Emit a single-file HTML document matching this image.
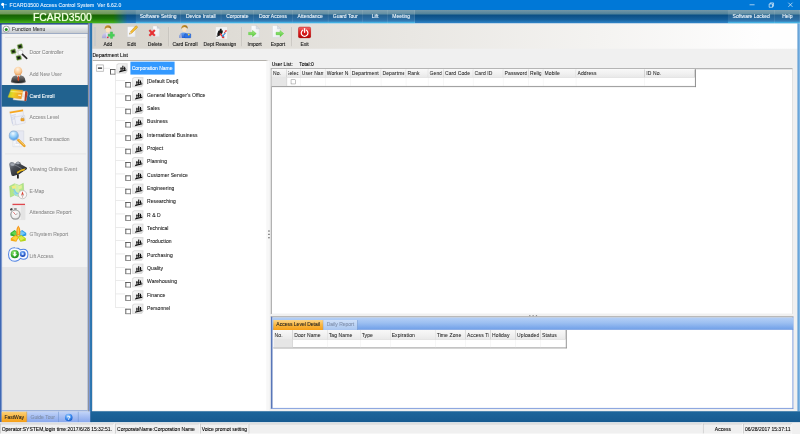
<!DOCTYPE html>
<html lang="en"><head><meta charset="utf-8"><title>FCARD3500 Access Control System</title>
<style>
*{box-sizing:border-box;margin:0;padding:0}
html,body{width:800px;height:434px;overflow:hidden;background:#f0f0f0}
body{font-family:"Liberation Sans",sans-serif;font-size:12px;color:#000;-webkit-text-stroke:0.2px currentColor}
#app{position:absolute;left:0;top:0;width:1920px;height:1042px;transform:scale(0.4166667);transform-origin:0 0;background:#f0f0f0;overflow:hidden}
.a{position:absolute}
.t{position:absolute;white-space:nowrap;line-height:14px;height:14px}
#title{left:0;top:0;width:1920px;height:23.5px;background:#0078d7}
#title .t{color:#e4f1ff;font-size:12px;left:23px;top:5px;letter-spacing:.28px;-webkit-text-stroke:.25px #e4f1ff}
#banner{left:0;top:23.5px;width:1920px;height:32.5px;background:linear-gradient(to bottom,#7397a8 0,#4f8199 31%,#1d5f8c 35%,#0b4f85 40%,#15609c 72%,#3288cc 100%)}
#green{left:0;top:0;width:330px;height:33px;background:linear-gradient(to bottom,#86a874 0,#6a9658 30%,#3c7a22 33%,#176404 40%,#1f7a08 65%,#4fbe20 100%);-webkit-mask-image:linear-gradient(to right,#000 0,#000 272px,transparent 306px);mask-image:linear-gradient(to right,#000 0,#000 272px,transparent 306px)}
#logo{left:79px;top:2px;transform:scaleX(.925);font-size:27px;line-height:30px;height:30px;color:#f4ffe6;text-shadow:0 0 3px #d8ffb0;transform-origin:0 50%}
.mi{position:absolute;top:0;height:33px;background:linear-gradient(to bottom,rgba(255,255,255,.10),rgba(255,255,255,.10) 84%,rgba(80,220,255,.6) 90%,rgba(120,220,255,.35) 100%);border-right:1px solid rgba(255,255,255,.22);color:#eaf3f9;font-size:12px;line-height:33px;text-align:center;white-space:nowrap;-webkit-text-stroke:0.15px #eaf3f9;text-shadow:0 0 2px rgba(255,255,255,.35)}

#toolbar{left:221px;top:57px;width:1693px;height:60px;background:linear-gradient(to right,#d6d2ca 0,#dfdcd6 20%,#e9e7e3 45%,#f4f3f1 72%,#fefefe 95%)}
#toolbar .sep{top:8px;width:1px;height:46px;background:#a9a59e;box-shadow:1px 0 0 #f4f2ee}
.tb{position:absolute;top:0;width:100px;height:60px;text-align:center}
.tb .ico{position:absolute;left:34px;top:2px;width:32px;height:34px;display:block}
.tb .ico svg{display:block}
.tb .lb{position:absolute;left:0;width:100px;top:42.5px;line-height:14px;font-size:12px;white-space:nowrap;color:#111}
#side{left:0;top:56px;width:221px;height:958px;background:#3f68b4}
#side:before{content:"";position:absolute;left:0;top:0;width:221px;height:3px;background:#1d3f78}
#side:after{content:"";position:absolute;left:211px;top:0;width:10px;height:931px;background:linear-gradient(to right,#8e929c 0,#8e929c 1.5px,#809ddb 1.5px,#7191d5 6px,#2f78b2 6px,#2a72ab 10px)}
#sidehead{left:4px;top:3px;width:207px;height:22px;background:linear-gradient(to bottom,#f8f9fb,#dfe2e6 50%,#c4c8cd);border-bottom:1px solid #a4a8ae}
#sidepanel{left:4px;top:25px;width:207px;height:904px;border-bottom:1px solid #b9b9b9;background:linear-gradient(to bottom,#f2f2f2 0,#f2f2f2 560px,#e6e6e6 560px,#e6e6e6 100%);border:1px solid #fff;border-top:0}
.si{position:absolute;left:4px;width:208px;height:52px}
.si.sel{background:#21628f}
.si .sico{position:absolute;left:16px;top:3px;width:48px;height:46px;display:block}
.si .slb{position:absolute;left:67px;top:19px;line-height:14px;font-size:12px;white-space:nowrap;color:#8c8c8c;text-shadow:1px 1px 0 #fff}
.si.sel .slb{color:#fff;text-shadow:none}
#sidetabs{left:4px;top:930px;width:213px;height:28px;background:linear-gradient(to bottom,#c2d4f8,#a3bcf2 50%,#86a6ec);border-top:2px solid #eef3fc}
.stab{position:absolute;top:0;height:26px;line-height:26px;text-align:center;font-size:12px;border-right:1px solid #5f86c4;white-space:nowrap}
.stab.on{background:linear-gradient(to bottom,#fbd27c,#f9b53c 50%,#f59d14);color:#222;border-right:1px solid #c98a2a}
#tree{left:222px;top:144px;width:424px;height:842px;background:#fff;border-top:2px solid #a5a29c;border-left:1px solid #c8c8c8;border-right:7px solid #f7f7f7;border-bottom:2px solid #f7f7f7;overflow:hidden}
#tree>*{margin-top:-2px;margin-left:-1px}
.ln{background:#cfcfcf}
.exp{width:18px;height:17px;border:1px solid #7a7a7a;background:#fff;border-radius:1px;box-shadow:inset 0 0 0 1px #e4e4e4}
.exp i{position:absolute;left:3px;top:6px;width:10px;height:3px;background:#222}
.cb{width:13px;height:13px;border:2px solid #7c7c7c;border-top-color:#484848;border-left-color:#484848;background:#fff}
.tl{letter-spacing:.15px;color:#1c1c1c}
.cb2{width:11px;height:11px;border:1px solid #707070;background:#fff}
.fo{width:26px;height:26px}
.tsel{background:#3399ff;color:#fff;line-height:31px;font-size:12px;white-space:nowrap}
.tsel span{position:absolute;left:3px;top:0}
#ulist{left:650px;top:164px;width:1252px;height:590px;background:#fff;border-top:2px solid #929292;border-left:2px solid #8c8c8c;border-bottom:1px solid #e4e4e4;border-right:1px solid #c4c4c4}
.grid{border-right:2px solid #808080;border-bottom:2px solid #808080;background:#fff;overflow:hidden}
.gh{position:absolute;top:0;height:20px;line-height:20px;background:linear-gradient(to bottom,#f8f8f8,#f0f0f0 60%,#e9e9e9);border-right:1px solid #a4a4a4;border-bottom:1px solid #c4c4c4;overflow:hidden;font-size:12px;white-space:nowrap;color:#222;-webkit-text-stroke:0.12px #222;letter-spacing:.25px}
.gh span{position:absolute;left:3px;right:4px;top:0;bottom:0;overflow:hidden;display:block}
.gh span.c{text-indent:-6px}
.gc{position:absolute;border-right:1px solid #ececec;border-bottom:1px solid #d8d8d8}
.gc0{position:absolute;background:#e6e6e6;border-right:1px solid #c8c8c8}
#tabp{left:650px;top:759px;width:1254px;height:222px;background:#fff;border:2px solid #6a8cd6;border-left:4px solid #5876b8;border-top:3px solid #a3a3a3}
#tabstrip{left:0;top:0;width:1250px;height:30px;background:linear-gradient(to bottom,#b5d0f6 0,#9cbff1 45%,#6f9fe8 100%);border-bottom:1px solid #5f8ad6}
.tab{position:absolute;top:6px;height:24px;line-height:23px;text-align:center;font-size:12px;color:#8191ad;border-right:1px solid #5f86c4;white-space:nowrap;background:linear-gradient(to bottom,#cfe0f8,#a9c6f0)}
.tab.on{background:linear-gradient(to bottom,#fcd589,#f9b640 50%,#f6a01a);color:#222;border-right:1px solid #c98a2a}
#status{left:0;top:1014px;width:1920px;height:28px;background:#f0f0f0;border-top:1px solid #fbfbfb}
.sp{position:absolute;top:2px;height:24px;line-height:25px;font-size:12px;white-space:nowrap;overflow:hidden;border:1px solid #a6a6a6;border-right-color:#fff;border-bottom-color:#fff;padding:0 3px}
</style></head>
<body><div id="app">
<div id="title" class="a">
<svg class="a" style="left:2px;top:3px" width="18" height="18" viewBox="0 0 18 18"><circle cx="4.6" cy="7.4" r="3.7" fill="#fff"/><rect x="5.4" y="9" width="2.3" height="8" fill="#dcecff"/><rect x="10" y="7" width="4.4" height="2.4" fill="#7cc4ff"/></svg>
<div class="t">FCARD3500 Access Control System&nbsp; Ver 6.62.0</div>
<svg class="a" style="left:1782px;top:0" width="138" height="23" viewBox="0 0 138 23"><path d="M17 11.500h12" stroke="#fff" stroke-width="1.500" fill="none"/><path d="M64 9.500h8v8h-8z M66.500 9.500v-2.500h8v8h-2.500" stroke="#fff" stroke-width="1.500" fill="none"/><path d="M110 6.500l10 10M120 6.500l-10 10" stroke="#fff" stroke-width="1.500" fill="none"/></svg>
</div>
<div id="banner" class="a">
<div id="green" class="a"></div>
<div id="logo" class="t">FCARD3500</div>
<div class="mi" style="left:326px;width:108px">Software Setting</div>
<div class="mi" style="left:434px;width:97px">Device Install</div>
<div class="mi" style="left:531px;width:78px">Corporate</div>
<div class="mi" style="left:609px;width:93px">Door Access</div>
<div class="mi" style="left:702px;width:86px">Attendance</div>
<div class="mi" style="left:788px;width:82px">Guard Tour</div>
<div class="mi" style="left:870px;width:61px">Lift</div>
<div class="mi" style="left:931px;width:65px">Meeting</div>
<div class="mi" style="left:1747px;width:113px">Software Locked</div>
<div class="mi" style="left:1860px;width:60px">Help</div>
</div>
<div id="toolbar" class="a">
<div class="a" style="left:6px;top:8px;width:2px;height:46px;background:#b9c4cc"></div>
<div class="a sep" style="left:183px"></div>
<div class="a sep" style="left:358px"></div>
<div class="a sep" style="left:478px"></div>
<div class="tb" style="left:-12px"><span class="ico"><svg width="32" height="34" viewBox="0 0 32 34"><defs><linearGradient id="b_add0" x1="0" y1="0" x2="0" y2="1"><stop offset="0" stop-color="#d4cdec"/><stop offset="1" stop-color="#a7a6d6"/></linearGradient><linearGradient id="h_add0" x1="0" y1="0" x2="1" y2="1"><stop offset="0" stop-color="#d9a436"/><stop offset="1" stop-color="#8a5a10"/></linearGradient></defs><path d="M1.500 32.500q0-12.500 9-12.500q8 0 8 12.500z" fill="url(#b_add0)"/><path d="M12 21l3 0 1 11h-3z" fill="#e8f0f8"/><circle cx="15.500" cy="30.500" r="2" fill="#e0363a"/><ellipse cx="16" cy="13" rx="5" ry="6" fill="#fde3c0"/><path d="M8 11.500q0-10 8-10q8.500 0 8 9.500q-3-4-8-4q-5 0-8 4.500z" fill="url(#h_add0)"/><path d="M22 17.500h5v5.500h5.500v5H27v5.500h-5V28h-5.500v-5H22z" fill="#46d456" stroke="#25a836" stroke-width=".8"/></svg></span><span class="lb">Add</span></div>
<div class="tb" style="left:45px"><span class="ico"><svg width="32" height="34" viewBox="0 0 32 34"><defs><linearGradient id="p_edit0" x1="0" y1="0" x2="1" y2="1"><stop offset="0" stop-color="#ffffff"/><stop offset="1" stop-color="#e8eaee"/></linearGradient></defs><path d="M6 5h19v25H6z" fill="url(#p_edit0)" stroke="#d0d4da" stroke-width="1"/><path d="M11 23l2-6L25.500 3.500q2.500-1 4 1t-.5 3.500L16 21z" fill="#f4bc32" stroke="#b8860f" stroke-width="1"/><path d="M11 23l2-6 3 4z" fill="#f6dcae"/><path d="M11 23l.8-2.400 1.100 1.600z" fill="#333"/></svg></span><span class="lb">Edit</span></div>
<div class="tb" style="left:101px"><span class="ico"><svg width="32" height="34" viewBox="0 0 32 34"><defs><linearGradient id="p_del0" x1="0" y1="0" x2="1" y2="1"><stop offset="0" stop-color="#ffffff"/><stop offset="1" stop-color="#e6e8ec"/></linearGradient></defs><path d="M11 3.500h10.500l5.500 5.500v20H11z" fill="url(#p_del0)" stroke="#d0d3d9" stroke-width="1"/><path d="M21.500 3.500v5.500h5.500z" fill="#cfd3da" stroke="#b4b8c0" stroke-width=".8"/><path d="M1 15l3-3 5 4.500 5-4.500 3 3-4.700 5 4.700 5-3 3-5-4.500-5 4.500-3-3 4.700-5z" fill="#ea3034" stroke="#c4181c" stroke-width=".6"/></svg></span><span class="lb">Delete</span></div>
<div class="tb" style="left:173px"><span class="ico"><svg width="32" height="34" viewBox="0 0 32 34"><defs><linearGradient id="b_card0" x1="0" y1="0" x2="0" y2="1"><stop offset="0" stop-color="#6aa6f4"/><stop offset="1" stop-color="#2460d4"/></linearGradient><linearGradient id="h_card0" x1="0" y1="0" x2="1" y2="1"><stop offset="0" stop-color="#d9a436"/><stop offset="1" stop-color="#8a5a10"/></linearGradient></defs><path d="M2 32q0-13 11-13q9 0 11 13z" fill="url(#b_card0)"/><path d="M2 32q0-9 5-12l2 12z" fill="#b8b8d8" opacity=".8"/><ellipse cx="14.500" cy="11.500" rx="5" ry="6" fill="#fde3c0"/><path d="M7 10.500q0-9.500 8-9.500q8 0 7.500 9q-3-4-7.500-4q-5 0-8 4.500z" fill="url(#h_card0)"/><rect x="15" y="22" width="15" height="10" rx="1.500" fill="#2f74e6" stroke="#1a52b8" stroke-width="1"/><circle cx="25" cy="24" r="2.200" fill="#ffdc3a"/></svg></span><span class="lb">Card Enroll</span></div>
<div class="tb" style="left:257px"><span class="ico"><svg width="34" height="34" viewBox="0 0 34 34" style="overflow:visible"><rect x="6" y="6" width="27" height="28" fill="#f3f3f3"/><path d="M9 24l3-9 3-1 1-4h4l0 4 3 0-1 6-5 5-4 1z" fill="#151515"/><path d="M8 27l10-5v2.500l-10 5z" fill="#151515"/><path d="M17 20l7 8 1.500-2 1 7-7-1 2-1.500-7-8z" fill="#e63232"/><path d="M30 21l-5 6 2 1.500-6 .5 .5-6 1.500 2 5-6z" fill="#2e96e4"/><path d="M25 20l4-5-2-1 5-1v5l-1.500-1.500-4 5z" fill="#e63232"/></svg></span><span class="lb">Dept Reassign</span></div>
<div class="tb" style="left:340px"><span class="ico"><svg width="32" height="34" viewBox="0 0 32 34"><defs><linearGradient id="p_imp0" x1="0" y1="0" x2="1" y2="1"><stop offset="0" stop-color="#ffffff"/><stop offset="1" stop-color="#e6e8ec"/></linearGradient><linearGradient id="g_imp0" x1="0" y1="0" x2="0" y2="1"><stop offset="0" stop-color="#a4ea84"/><stop offset="1" stop-color="#56c83c"/></linearGradient></defs><path d="M8 2.500h12l7.500 7.500v21H8z" fill="url(#p_imp0)" stroke="#d2d5db" stroke-width="1"/><path d="M20 2.500v7.500h7.500z" fill="#dde0e6" stroke="#b8bcc4" stroke-width=".8"/><path d="M1.500 18.500h9.500v-4.500l9 7.500-9 7.500v-4.500H1.500z" fill="url(#g_imp0)" stroke="#e4f6dc" stroke-width="1.600"/><path d="M1.500 18.500h9.500v-4.500l9 7.500-9 7.500v-4.500H1.500z" fill="url(#g_imp0)" stroke="#4cb838" stroke-width=".7"/></svg></span><span class="lb">Import</span></div>
<div class="tb" style="left:396px"><span class="ico"><svg width="32" height="34" viewBox="0 0 32 34"><defs><linearGradient id="p_exp0" x1="0" y1="0" x2="1" y2="1"><stop offset="0" stop-color="#ffffff"/><stop offset="1" stop-color="#e6e8ec"/></linearGradient><linearGradient id="g_exp0" x1="0" y1="0" x2="0" y2="1"><stop offset="0" stop-color="#a4ea84"/><stop offset="1" stop-color="#56c83c"/></linearGradient></defs><path d="M3 2.500h12l7.500 7.500v21H3z" fill="url(#p_exp0)" stroke="#d2d5db" stroke-width="1"/><path d="M15 2.500v7.500h7.500z" fill="#dde0e6" stroke="#b8bcc4" stroke-width=".8"/><path d="M11.500 18.500h9.500v-4.500l9 7.500-9 7.500v-4.500h-9.500z" fill="url(#g_exp0)" stroke="#e4f6dc" stroke-width="1.600"/><path d="M11.500 18.500h9.500v-4.500l9 7.500-9 7.500v-4.500h-9.500z" fill="url(#g_exp0)" stroke="#4cb838" stroke-width=".7"/></svg></span><span class="lb">Export</span></div>
<div class="tb" style="left:460px"><span class="ico"><svg width="32" height="34" viewBox="0 0 32 34"><defs><linearGradient id="r_exit0" x1="0" y1="0" x2="0" y2="1"><stop offset="0" stop-color="#f66a6a"/><stop offset=".45" stop-color="#e02020"/><stop offset="1" stop-color="#b40808"/></linearGradient></defs><rect x="1" y="6" width="30" height="26" rx="4" fill="url(#r_exit0)" stroke="#a80c0c" stroke-width="1"/><path d="M11.500 13.500a8 8 0 1 0 9 0" fill="none" stroke="#fff" stroke-width="3" stroke-linecap="round"/><path d="M16 9.500v9" stroke="#fff" stroke-width="3" stroke-linecap="round"/></svg></span><span class="lb">Exit</span></div>
</div>
<div id="side" class="a">
<div id="sidehead" class="a"><svg class="a" style="left:2px;top:2px" width="18" height="18" viewBox="0 0 18 18"><circle cx="9" cy="9" r="7.5" fill="#fff" stroke="#85898f" stroke-width="2"/><circle cx="9" cy="9.5" r="3.6" fill="#1d8a1d"/></svg><div class="t" style="left:25px;top:4px;color:#3c3c3c">Function Menu</div></div>
<div id="sidepanel" class="a"></div>
<div class="a" style="left:12px;top:34px;width:195px;height:1px;background:#d4d4d4"></div>
<div class="a" style="left:12px;top:313px;width:195px;height:1px;background:#d4d4d4"></div>
<div class="si" style="top:44px"><span class="sico"><svg width="48" height="46" viewBox="0 0 48 46"><path d="M14 24l12-8M15 26l8 9M28 12l2 10" stroke="#c9c9c9" stroke-width="1.500"/><g stroke="#a9c48c" stroke-width="1.200"><rect x="22" y="3" width="12" height="11" rx="2" fill="#3f6a1e" transform="rotate(-14 28 8)"/><rect x="6" y="15" width="12" height="11" rx="2" fill="#4a7a24" transform="rotate(-14 12 20)"/><rect x="19" y="30" width="12" height="11" rx="2" fill="#3f6a1e" transform="rotate(-14 25 35)"/></g><rect x="25" y="6" width="6" height="5" fill="#141414" transform="rotate(-14 28 8)"/><rect x="9" y="18" width="6" height="5" fill="#141414" transform="rotate(-14 12 20)"/><rect x="22" y="33" width="6" height="5" fill="#141414" transform="rotate(-14 25 35)"/><circle cx="29" cy="23" r="6" fill="#fafcfe" stroke="#d4d4d4" stroke-width="2.500"/><path d="M34 27.500l10 9.500" stroke="#2a2a2a" stroke-width="4" stroke-linecap="round"/></svg></span><span class="slb">Door Controller</span></div>
<div class="si" style="top:96px"><span class="sico"><svg width="48" height="46" viewBox="0 0 48 46"><defs><radialGradient id="h_s_user0" cx=".45" cy=".3" r=".75"><stop offset="0" stop-color="#fff2e0"/><stop offset=".6" stop-color="#f8c690"/><stop offset="1" stop-color="#dc9050"/></radialGradient><linearGradient id="s_s_user0" x1="0" y1="0" x2="0" y2="1"><stop offset="0" stop-color="#8a8a8a"/><stop offset=".6" stop-color="#4a4a4a"/><stop offset="1" stop-color="#1c1c1c"/></linearGradient></defs><ellipse cx="24" cy="41" rx="18" ry="4.500" fill="#000" opacity=".55"/><path d="M7 40q0-15 17-15t17 15q-8 4-17 4t-17-4z" fill="url(#s_s_user0)"/><path d="M19.500 26l4.500 6 4.500-6-4.500-2z" fill="#f6f6f6"/><path d="M22.800 27.500h2.400l1 9-2.200 3.500-2.200-3.500z" fill="#dc4a20"/><ellipse cx="23.500" cy="15.500" rx="10" ry="10.500" fill="url(#h_s_user0)"/></svg></span><span class="slb">Add New User</span></div>
<div class="si sel" style="top:148px"><span class="sico"><svg width="48" height="46" viewBox="0 0 48 46" style="overflow:visible"><defs><linearGradient id="c_s_card0" x1="0" y1="0" x2="1" y2=".15"><stop offset="0" stop-color="#a2d22a"/><stop offset=".4" stop-color="#ecd424"/><stop offset="1" stop-color="#f59622"/></linearGradient></defs><path d="M14 13l30-1.500 2.500 4.500-4 19.500-31-3z" fill="#f4f0ea" stroke="#c4bcb0" stroke-width="1"/><path d="M40.500 11.700l3.500-.2 2.500 4.500-4 19.500-4-.4z" fill="#b43c24"/><path d="M14 22l25-1M13.500 26l25-1" stroke="#d8d2c8" stroke-width="1.500"/><path d="M6.400 7l28.600 2.500-4 21L-1 26.300z" fill="url(#c_s_card0)" stroke="#d0a828" stroke-width=".8"/><path d="M6 10.500l28.500 2.500-.6 3L5 13.500z" fill="#fff6a0" opacity=".55"/><path d="M24 19.500l7 .7-.6 3.500-7-.7z" fill="#fbeec0" opacity=".9"/></svg></span><span class="slb">Card Enroll</span></div>
<div class="si" style="top:200px"><span class="sico"><svg width="48" height="46" viewBox="0 0 48 46"><defs><linearGradient id="p_s_level0" x1="0" y1="0" x2="1" y2="1"><stop offset="0" stop-color="#ffffff"/><stop offset="1" stop-color="#dcdeea"/></linearGradient></defs><path d="M3 9l32-5 4 30-28 8z" fill="url(#p_s_level0)" stroke="#cfd1dc" stroke-width="1"/><path d="M3 9l32-5 .6 4.200-31.800 5.300z" fill="#f7a720"/><path d="M8 18l10-1.800M8.500 22.500l9-1.600M9.500 27l7-1.300" stroke="#b9c0dc" stroke-width="1.500"/><path d="M6 14l4 24" stroke="#8aa0d8" stroke-width="1.200" opacity=".6"/><path d="M15 22l24-4 1.500 18-22 5z" fill="#eef0f8" stroke="#c6cad8" stroke-width="1"/><rect x="30" y="25" width="8" height="6.500" rx="1.200" fill="#f0a426" stroke="#c07c14" stroke-width=".8"/><path d="M31.800 25v-2a2.200 2.200 0 0 1 4.400 0v2" fill="none" stroke="#b8b8b8" stroke-width="1.500"/></svg></span><span class="slb">Access Level</span></div>
<div class="si" style="top:252px"><span class="sico"><svg width="48" height="46" viewBox="0 0 48 46"><defs><radialGradient id="g_s_event0" cx=".42" cy=".28" r=".8"><stop offset="0" stop-color="#f2faff"/><stop offset=".5" stop-color="#8ecbf8"/><stop offset="1" stop-color="#3486e0"/></radialGradient></defs><path d="M13 8h20v33H11V10z" fill="#f6f7fb" stroke="#ccd0da" stroke-width="1"/><path d="M19 3h18v31H19z" fill="#e6e8f2" stroke="#c6cad6" stroke-width="1"/><path d="M15 34h12v5H15z" fill="#ffffff" stroke="#d4d8e0" stroke-width=".8"/><circle cx="13" cy="14.500" r="11" fill="url(#g_s_event0)" stroke="#93b4d8" stroke-width="2.500"/><path d="M24 25l14.500 14" stroke="#e9a021" stroke-width="6" stroke-linecap="round"/><path d="M25 25l12.500 12" stroke="#fad980" stroke-width="2" stroke-linecap="round"/></svg></span><span class="slb">Event Transaction</span></div>
<div class="si" style="top:324px"><span class="sico"><svg width="48" height="46" viewBox="0 0 48 46"><defs><linearGradient id="d_s_view0" x1="0" y1="0" x2="1" y2="1"><stop offset="0" stop-color="#9aa0aa"/><stop offset=".35" stop-color="#4a4e56"/><stop offset="1" stop-color="#141518"/></linearGradient></defs><path d="M2 12q0-6 6-6t7 4l3-1q2-5 7-4t5 6l14 8q2 2 0 4l-6 4-12 8-12 4q-6 2-7-4z" fill="url(#d_s_view0)"/><path d="M8 14q8-3 14 2l10 6" fill="none" stroke="#aab0ba" stroke-width="1.600" opacity=".7"/><path d="M20 30q10-8 22-9l-4 5q-9 1-16 8z" fill="#e8b81a"/><ellipse cx="10" cy="11.500" rx="5" ry="3" fill="#a4aab4"/><ellipse cx="23" cy="8.500" rx="4.500" ry="2.800" fill="#a4aab4"/><path d="M23 37v7" stroke="#111" stroke-width="4" stroke-linecap="round"/></svg></span><span class="slb">Viewing Online Event</span></div>
<div class="si" style="top:376px"><span class="sico"><svg width="48" height="46" viewBox="0 0 48 46"><path d="M3 12l12-6 11 4 10-5 1 26-11 6-11-4-10 5z" fill="#b4e68a" stroke="#8fce62" stroke-width="1"/><path d="M15 6l11 4 0 27-11-4z" fill="#cff0aa"/><path d="M8 16q6 2 8 8t10 6" fill="none" stroke="#7ccaf2" stroke-width="3"/><path d="M8 12l9-2.500 2 6-9 3.500z" fill="#f4ec82" opacity=".95"/><path d="M10 24q8 4 14 12l-8-3z" fill="#8ad6f4"/><path d="M24 12l8-3 .5 8-8 3z" fill="#e4f29a"/><circle cx="34" cy="32" r="10" fill="#f8f8f8" stroke="#bdbdbd" stroke-width="2"/><path d="M34 24l2.600 8-2.600 8-2.600-8z" fill="#de3c2c"/><path d="M34 32l-2.600 0 2.600 8 2.600-8z" fill="#c4c4c4"/></svg></span><span class="slb">E-Map</span></div>
<div class="si" style="top:428px"><span class="sico"><svg width="48" height="46" viewBox="0 0 48 46"><defs><radialGradient id="w_s_att0" cx=".4" cy=".35" r=".8"><stop offset="0" stop-color="#ffffff"/><stop offset=".75" stop-color="#ececec"/><stop offset="1" stop-color="#b8b8b8"/></radialGradient></defs><path d="M11 4h29v36H11z" fill="#f0f0f0" stroke="#d6d6d6" stroke-width="1"/><path d="M30 6h10v34H30z" fill="#e4e4e4"/><rect x="10" y="2" width="30" height="3.200" fill="#e0484e"/><circle cx="17" cy="28" r="12.500" fill="#9c9c9c"/><circle cx="17" cy="28" r="9.600" fill="url(#w_s_att0)"/><rect x="4" y="13" width="6" height="5" rx="1.500" fill="#4a4a4a" transform="rotate(-35 7 15)"/><rect x="14" y="12.500" width="6" height="4" fill="#8a8a8a"/><path d="M17 28l-5-6" stroke="#d43a3a" stroke-width="1.600"/><path d="M17 28l5-2" stroke="#777" stroke-width="1.400"/></svg></span><span class="slb">Attendance Report</span></div>
<div class="si" style="top:480px"><span class="sico"><svg width="48" height="46" viewBox="0 0 48 46"><path d="M5 20l10-7 11 9-8 8-13-4z" fill="#2fb02f"/><path d="M7 20.500l9-5 8 6-7 5.500z" fill="#62d650"/><path d="M43 20l-10-7-11 9 8 8 13-4z" fill="#2a9ae8"/><path d="M41 20.500l-9-5-8 6 7 5.500z" fill="#72c8f8"/><path d="M6 33l11-8 9 4-7 12-13-2z" fill="#f4a81a"/><path d="M8.500 33l8.500-5.500 6 3-5 8.500z" fill="#fcd23a"/><path d="M42 33l-11-8-9 4 7 12 13-2z" fill="#b4d41a"/><path d="M39.500 33l-8.500-5.500-6 3 5 8.500z" fill="#dcec4a"/><path d="M24 2q7 9 4 24h-8q-3-15 4-24z" fill="#f8961a"/><path d="M24 6q3.500 7 1.500 17h-3q-2-10 1.500-17z" fill="#fcc84e"/></svg></span><span class="slb">GTsystem Report</span></div>
<div class="si" style="top:532px"><span class="sico"><svg width="49" height="46" viewBox="0 0 49 46" style="overflow:visible"><defs><radialGradient id="g_s_lift0" cx=".4" cy=".3" r=".8"><stop offset="0" stop-color="#9ee87c"/><stop offset=".6" stop-color="#34ac2e"/><stop offset="1" stop-color="#167c1a"/></radialGradient><radialGradient id="b_s_lift0" cx=".4" cy=".3" r=".8"><stop offset="0" stop-color="#86bcfa"/><stop offset=".6" stop-color="#3266d4"/><stop offset="1" stop-color="#183690"/></radialGradient></defs><path d="M16 3.500q8 0 13.500 5q3-1.500 6.500-1.500q11 0 11 12t-11 12q-3.500 0-6.500-2q-5 7-13.500 7q-15.500 0-15.500-16.500T16 3.500z" fill="#f6f9ff" stroke="#4f82e2" stroke-width="2.400"/><circle cx="15.500" cy="19" r="9.800" fill="url(#g_s_lift0)"/><path d="M13.500 13h4v6h3.500l-5.500 6-5.500-6h3.500z" fill="#fff"/><circle cx="34.500" cy="18.500" r="7" fill="url(#b_s_lift0)"/><circle cx="34.500" cy="18.500" r="2.500" fill="#d4e6ff"/></svg></span><span class="slb">Lift Access</span></div>
<div id="sidetabs" class="a"><div class="stab on" style="left:0;width:61px">FastWay</div><div class="stab" style="left:61px;width:76px;color:#7f8ea8">Guide Tour</div><div class="stab" style="left:137px;width:47px"><svg width="20" height="20" viewBox="0 0 24 24" style="position:absolute;left:14px;top:4px"><defs><radialGradient id="qg" cx=".4" cy=".3" r=".8"><stop offset="0" stop-color="#a8d4ff"/><stop offset=".6" stop-color="#2f7fe8"/><stop offset="1" stop-color="#1450b8"/></radialGradient></defs><circle cx="12" cy="12" r="11" fill="url(#qg)"/><text x="12" y="18" text-anchor="middle" font-family="Liberation Sans,sans-serif" font-weight="bold" font-size="17" fill="#fff">?</text></svg></div><div class="stab" style="left:184px;width:29px;border-right:0"></div></div>
</div>
<div class="t" style="left:222px;top:126px">Department List</div>
<div class="t" style="left:652px;top:147px">User List:</div>
<div class="t" style="left:718px;top:147px">Total:0</div>
<div id="tree" class="a">
<div class="a ln" style="left:27px;top:19px;width:15px;height:1px"></div>
<div class="a ln" style="left:55px;top:36px;width:1px;height:559px"></div>
<div class="a exp" style="left:9px;top:11px"><i></i></div>
<div class="a cb" style="left:42px;top:22px"></div>
<div class="a fo" style="left:57px;top:7px"><svg width="28" height="27" viewBox="0 0 28 27"><defs><linearGradient id="fg_folder0" x1="0" y1="0" x2="1" y2="1"><stop offset="0" stop-color="#fcfcfc"/><stop offset="1" stop-color="#dadada"/></linearGradient></defs><path d="M0 4l5-3.500h22.500v19l-4.500 6H0z" fill="#dcdcdc"/><path d="M2.500 5.500l3.500-2.500h19v15.500l-3.500 5H2.500z" fill="url(#fg_folder0)"/><path d="M10.400 10.500h2.400v9h-2.400zM14.600 7h2.600v11h-2.600zM19 9h2.400v8h-2.400z" fill="#0a0a0a"/><path d="M9.500 12.800h13.500v1.100H9.500z" fill="#0a0a0a"/><path d="M6.500 22.800l1.600-3.200L24.500 15.700v2.600z" fill="#0a0a0a"/></svg></div>
<div class="a tsel" style="left:91px;top:4px;width:106px;height:31px"><span>Corporation Name</span></div>
<div class="a ln" style="left:56px;top:49px;width:22px;height:1px"></div>
<div class="a cb" style="left:79px;top:53px"></div>
<div class="a fo" style="left:95px;top:40px"><svg width="28" height="27" viewBox="0 0 28 27"><defs><linearGradient id="fg_folder1" x1="0" y1="0" x2="1" y2="1"><stop offset="0" stop-color="#fcfcfc"/><stop offset="1" stop-color="#dadada"/></linearGradient></defs><path d="M0 4l5-3.500h22.500v19l-4.500 6H0z" fill="#dcdcdc"/><path d="M2.500 5.500l3.500-2.500h19v15.500l-3.500 5H2.500z" fill="url(#fg_folder1)"/><path d="M10.400 10.500h2.400v9h-2.400zM14.600 7h2.600v11h-2.600zM19 9h2.400v8h-2.400z" fill="#0a0a0a"/><path d="M9.500 12.800h13.500v1.100H9.500z" fill="#0a0a0a"/><path d="M6.500 22.800l1.600-3.200L24.500 15.700v2.600z" fill="#0a0a0a"/></svg></div>
<div class="t tl" style="left:131px;top:45px">[Default Dept]</div>
<div class="a ln" style="left:56px;top:81px;width:22px;height:1px"></div>
<div class="a cb" style="left:79px;top:85px"></div>
<div class="a fo" style="left:95px;top:72px"><svg width="28" height="27" viewBox="0 0 28 27"><defs><linearGradient id="fg_folder2" x1="0" y1="0" x2="1" y2="1"><stop offset="0" stop-color="#fcfcfc"/><stop offset="1" stop-color="#dadada"/></linearGradient></defs><path d="M0 4l5-3.500h22.500v19l-4.500 6H0z" fill="#dcdcdc"/><path d="M2.500 5.500l3.500-2.500h19v15.500l-3.500 5H2.500z" fill="url(#fg_folder2)"/><path d="M10.400 10.500h2.400v9h-2.400zM14.600 7h2.600v11h-2.600zM19 9h2.400v8h-2.400z" fill="#0a0a0a"/><path d="M9.500 12.800h13.500v1.100H9.500z" fill="#0a0a0a"/><path d="M6.500 22.800l1.600-3.200L24.500 15.700v2.600z" fill="#0a0a0a"/></svg></div>
<div class="t tl" style="left:131px;top:77px">General Manager's Office</div>
<div class="a ln" style="left:56px;top:113px;width:22px;height:1px"></div>
<div class="a cb" style="left:79px;top:117px"></div>
<div class="a fo" style="left:95px;top:104px"><svg width="28" height="27" viewBox="0 0 28 27"><defs><linearGradient id="fg_folder3" x1="0" y1="0" x2="1" y2="1"><stop offset="0" stop-color="#fcfcfc"/><stop offset="1" stop-color="#dadada"/></linearGradient></defs><path d="M0 4l5-3.500h22.500v19l-4.500 6H0z" fill="#dcdcdc"/><path d="M2.500 5.500l3.500-2.500h19v15.500l-3.500 5H2.500z" fill="url(#fg_folder3)"/><path d="M10.400 10.500h2.400v9h-2.400zM14.600 7h2.600v11h-2.600zM19 9h2.400v8h-2.400z" fill="#0a0a0a"/><path d="M9.500 12.800h13.500v1.100H9.500z" fill="#0a0a0a"/><path d="M6.500 22.800l1.600-3.200L24.500 15.700v2.600z" fill="#0a0a0a"/></svg></div>
<div class="t tl" style="left:131px;top:109px">Sales</div>
<div class="a ln" style="left:56px;top:145px;width:22px;height:1px"></div>
<div class="a cb" style="left:79px;top:149px"></div>
<div class="a fo" style="left:95px;top:136px"><svg width="28" height="27" viewBox="0 0 28 27"><defs><linearGradient id="fg_folder4" x1="0" y1="0" x2="1" y2="1"><stop offset="0" stop-color="#fcfcfc"/><stop offset="1" stop-color="#dadada"/></linearGradient></defs><path d="M0 4l5-3.500h22.500v19l-4.500 6H0z" fill="#dcdcdc"/><path d="M2.500 5.500l3.500-2.500h19v15.500l-3.500 5H2.500z" fill="url(#fg_folder4)"/><path d="M10.400 10.500h2.400v9h-2.400zM14.600 7h2.600v11h-2.600zM19 9h2.400v8h-2.400z" fill="#0a0a0a"/><path d="M9.500 12.800h13.500v1.100H9.500z" fill="#0a0a0a"/><path d="M6.500 22.800l1.600-3.200L24.500 15.700v2.600z" fill="#0a0a0a"/></svg></div>
<div class="t tl" style="left:131px;top:141px">Business</div>
<div class="a ln" style="left:56px;top:177px;width:22px;height:1px"></div>
<div class="a cb" style="left:79px;top:181px"></div>
<div class="a fo" style="left:95px;top:168px"><svg width="28" height="27" viewBox="0 0 28 27"><defs><linearGradient id="fg_folder5" x1="0" y1="0" x2="1" y2="1"><stop offset="0" stop-color="#fcfcfc"/><stop offset="1" stop-color="#dadada"/></linearGradient></defs><path d="M0 4l5-3.500h22.500v19l-4.500 6H0z" fill="#dcdcdc"/><path d="M2.500 5.500l3.500-2.500h19v15.500l-3.500 5H2.500z" fill="url(#fg_folder5)"/><path d="M10.400 10.500h2.400v9h-2.400zM14.600 7h2.600v11h-2.600zM19 9h2.400v8h-2.400z" fill="#0a0a0a"/><path d="M9.500 12.800h13.500v1.100H9.500z" fill="#0a0a0a"/><path d="M6.500 22.800l1.600-3.200L24.500 15.700v2.600z" fill="#0a0a0a"/></svg></div>
<div class="t tl" style="left:131px;top:173px">International Business</div>
<div class="a ln" style="left:56px;top:209px;width:22px;height:1px"></div>
<div class="a cb" style="left:79px;top:213px"></div>
<div class="a fo" style="left:95px;top:200px"><svg width="28" height="27" viewBox="0 0 28 27"><defs><linearGradient id="fg_folder6" x1="0" y1="0" x2="1" y2="1"><stop offset="0" stop-color="#fcfcfc"/><stop offset="1" stop-color="#dadada"/></linearGradient></defs><path d="M0 4l5-3.500h22.500v19l-4.500 6H0z" fill="#dcdcdc"/><path d="M2.500 5.500l3.500-2.500h19v15.500l-3.500 5H2.500z" fill="url(#fg_folder6)"/><path d="M10.400 10.500h2.400v9h-2.400zM14.600 7h2.600v11h-2.600zM19 9h2.400v8h-2.400z" fill="#0a0a0a"/><path d="M9.500 12.800h13.500v1.100H9.500z" fill="#0a0a0a"/><path d="M6.500 22.800l1.600-3.200L24.500 15.700v2.600z" fill="#0a0a0a"/></svg></div>
<div class="t tl" style="left:131px;top:205px">Project</div>
<div class="a ln" style="left:56px;top:241px;width:22px;height:1px"></div>
<div class="a cb" style="left:79px;top:245px"></div>
<div class="a fo" style="left:95px;top:232px"><svg width="28" height="27" viewBox="0 0 28 27"><defs><linearGradient id="fg_folder7" x1="0" y1="0" x2="1" y2="1"><stop offset="0" stop-color="#fcfcfc"/><stop offset="1" stop-color="#dadada"/></linearGradient></defs><path d="M0 4l5-3.500h22.500v19l-4.500 6H0z" fill="#dcdcdc"/><path d="M2.500 5.500l3.500-2.500h19v15.500l-3.500 5H2.500z" fill="url(#fg_folder7)"/><path d="M10.400 10.500h2.400v9h-2.400zM14.600 7h2.600v11h-2.600zM19 9h2.400v8h-2.400z" fill="#0a0a0a"/><path d="M9.500 12.800h13.500v1.100H9.500z" fill="#0a0a0a"/><path d="M6.500 22.800l1.600-3.200L24.500 15.700v2.600z" fill="#0a0a0a"/></svg></div>
<div class="t tl" style="left:131px;top:237px">Planning</div>
<div class="a ln" style="left:56px;top:273px;width:22px;height:1px"></div>
<div class="a cb" style="left:79px;top:277px"></div>
<div class="a fo" style="left:95px;top:264px"><svg width="28" height="27" viewBox="0 0 28 27"><defs><linearGradient id="fg_folder8" x1="0" y1="0" x2="1" y2="1"><stop offset="0" stop-color="#fcfcfc"/><stop offset="1" stop-color="#dadada"/></linearGradient></defs><path d="M0 4l5-3.500h22.500v19l-4.500 6H0z" fill="#dcdcdc"/><path d="M2.500 5.500l3.500-2.500h19v15.500l-3.500 5H2.500z" fill="url(#fg_folder8)"/><path d="M10.400 10.500h2.400v9h-2.400zM14.600 7h2.600v11h-2.600zM19 9h2.400v8h-2.400z" fill="#0a0a0a"/><path d="M9.500 12.800h13.500v1.100H9.500z" fill="#0a0a0a"/><path d="M6.500 22.800l1.600-3.200L24.500 15.700v2.600z" fill="#0a0a0a"/></svg></div>
<div class="t tl" style="left:131px;top:269px">Customer Service</div>
<div class="a ln" style="left:56px;top:305px;width:22px;height:1px"></div>
<div class="a cb" style="left:79px;top:309px"></div>
<div class="a fo" style="left:95px;top:296px"><svg width="28" height="27" viewBox="0 0 28 27"><defs><linearGradient id="fg_folder9" x1="0" y1="0" x2="1" y2="1"><stop offset="0" stop-color="#fcfcfc"/><stop offset="1" stop-color="#dadada"/></linearGradient></defs><path d="M0 4l5-3.500h22.500v19l-4.500 6H0z" fill="#dcdcdc"/><path d="M2.500 5.500l3.500-2.500h19v15.500l-3.500 5H2.500z" fill="url(#fg_folder9)"/><path d="M10.400 10.500h2.400v9h-2.400zM14.600 7h2.600v11h-2.600zM19 9h2.400v8h-2.400z" fill="#0a0a0a"/><path d="M9.500 12.800h13.500v1.100H9.500z" fill="#0a0a0a"/><path d="M6.500 22.800l1.600-3.200L24.500 15.700v2.600z" fill="#0a0a0a"/></svg></div>
<div class="t tl" style="left:131px;top:301px">Engineering</div>
<div class="a ln" style="left:56px;top:337px;width:22px;height:1px"></div>
<div class="a cb" style="left:79px;top:341px"></div>
<div class="a fo" style="left:95px;top:328px"><svg width="28" height="27" viewBox="0 0 28 27"><defs><linearGradient id="fg_folder10" x1="0" y1="0" x2="1" y2="1"><stop offset="0" stop-color="#fcfcfc"/><stop offset="1" stop-color="#dadada"/></linearGradient></defs><path d="M0 4l5-3.500h22.500v19l-4.500 6H0z" fill="#dcdcdc"/><path d="M2.500 5.500l3.500-2.500h19v15.500l-3.500 5H2.500z" fill="url(#fg_folder10)"/><path d="M10.400 10.500h2.400v9h-2.400zM14.600 7h2.600v11h-2.600zM19 9h2.400v8h-2.400z" fill="#0a0a0a"/><path d="M9.500 12.800h13.500v1.100H9.500z" fill="#0a0a0a"/><path d="M6.500 22.800l1.600-3.200L24.500 15.700v2.600z" fill="#0a0a0a"/></svg></div>
<div class="t tl" style="left:131px;top:333px">Researching</div>
<div class="a ln" style="left:56px;top:369px;width:22px;height:1px"></div>
<div class="a cb" style="left:79px;top:373px"></div>
<div class="a fo" style="left:95px;top:360px"><svg width="28" height="27" viewBox="0 0 28 27"><defs><linearGradient id="fg_folder11" x1="0" y1="0" x2="1" y2="1"><stop offset="0" stop-color="#fcfcfc"/><stop offset="1" stop-color="#dadada"/></linearGradient></defs><path d="M0 4l5-3.500h22.500v19l-4.500 6H0z" fill="#dcdcdc"/><path d="M2.500 5.500l3.500-2.500h19v15.500l-3.500 5H2.500z" fill="url(#fg_folder11)"/><path d="M10.400 10.500h2.400v9h-2.400zM14.600 7h2.600v11h-2.600zM19 9h2.400v8h-2.400z" fill="#0a0a0a"/><path d="M9.500 12.800h13.500v1.100H9.500z" fill="#0a0a0a"/><path d="M6.500 22.800l1.600-3.200L24.500 15.700v2.600z" fill="#0a0a0a"/></svg></div>
<div class="t tl" style="left:131px;top:365px">R &amp; D</div>
<div class="a ln" style="left:56px;top:401px;width:22px;height:1px"></div>
<div class="a cb" style="left:79px;top:405px"></div>
<div class="a fo" style="left:95px;top:392px"><svg width="28" height="27" viewBox="0 0 28 27"><defs><linearGradient id="fg_folder12" x1="0" y1="0" x2="1" y2="1"><stop offset="0" stop-color="#fcfcfc"/><stop offset="1" stop-color="#dadada"/></linearGradient></defs><path d="M0 4l5-3.500h22.500v19l-4.500 6H0z" fill="#dcdcdc"/><path d="M2.500 5.500l3.500-2.500h19v15.500l-3.500 5H2.500z" fill="url(#fg_folder12)"/><path d="M10.400 10.500h2.400v9h-2.400zM14.600 7h2.600v11h-2.600zM19 9h2.400v8h-2.400z" fill="#0a0a0a"/><path d="M9.500 12.800h13.500v1.100H9.500z" fill="#0a0a0a"/><path d="M6.500 22.800l1.600-3.200L24.500 15.700v2.600z" fill="#0a0a0a"/></svg></div>
<div class="t tl" style="left:131px;top:397px">Technical</div>
<div class="a ln" style="left:56px;top:433px;width:22px;height:1px"></div>
<div class="a cb" style="left:79px;top:437px"></div>
<div class="a fo" style="left:95px;top:424px"><svg width="28" height="27" viewBox="0 0 28 27"><defs><linearGradient id="fg_folder13" x1="0" y1="0" x2="1" y2="1"><stop offset="0" stop-color="#fcfcfc"/><stop offset="1" stop-color="#dadada"/></linearGradient></defs><path d="M0 4l5-3.500h22.500v19l-4.500 6H0z" fill="#dcdcdc"/><path d="M2.500 5.500l3.500-2.500h19v15.500l-3.500 5H2.500z" fill="url(#fg_folder13)"/><path d="M10.400 10.500h2.400v9h-2.400zM14.600 7h2.600v11h-2.600zM19 9h2.400v8h-2.400z" fill="#0a0a0a"/><path d="M9.500 12.800h13.500v1.100H9.500z" fill="#0a0a0a"/><path d="M6.500 22.800l1.600-3.200L24.500 15.700v2.600z" fill="#0a0a0a"/></svg></div>
<div class="t tl" style="left:131px;top:429px">Production</div>
<div class="a ln" style="left:56px;top:465px;width:22px;height:1px"></div>
<div class="a cb" style="left:79px;top:469px"></div>
<div class="a fo" style="left:95px;top:456px"><svg width="28" height="27" viewBox="0 0 28 27"><defs><linearGradient id="fg_folder14" x1="0" y1="0" x2="1" y2="1"><stop offset="0" stop-color="#fcfcfc"/><stop offset="1" stop-color="#dadada"/></linearGradient></defs><path d="M0 4l5-3.500h22.500v19l-4.500 6H0z" fill="#dcdcdc"/><path d="M2.500 5.500l3.500-2.500h19v15.500l-3.500 5H2.500z" fill="url(#fg_folder14)"/><path d="M10.400 10.500h2.400v9h-2.400zM14.600 7h2.600v11h-2.600zM19 9h2.400v8h-2.400z" fill="#0a0a0a"/><path d="M9.500 12.800h13.500v1.100H9.500z" fill="#0a0a0a"/><path d="M6.500 22.800l1.600-3.200L24.500 15.700v2.600z" fill="#0a0a0a"/></svg></div>
<div class="t tl" style="left:131px;top:461px">Purchasing</div>
<div class="a ln" style="left:56px;top:497px;width:22px;height:1px"></div>
<div class="a cb" style="left:79px;top:501px"></div>
<div class="a fo" style="left:95px;top:488px"><svg width="28" height="27" viewBox="0 0 28 27"><defs><linearGradient id="fg_folder15" x1="0" y1="0" x2="1" y2="1"><stop offset="0" stop-color="#fcfcfc"/><stop offset="1" stop-color="#dadada"/></linearGradient></defs><path d="M0 4l5-3.500h22.500v19l-4.500 6H0z" fill="#dcdcdc"/><path d="M2.500 5.500l3.500-2.500h19v15.500l-3.500 5H2.500z" fill="url(#fg_folder15)"/><path d="M10.400 10.500h2.400v9h-2.400zM14.600 7h2.600v11h-2.600zM19 9h2.400v8h-2.400z" fill="#0a0a0a"/><path d="M9.500 12.800h13.500v1.100H9.500z" fill="#0a0a0a"/><path d="M6.500 22.800l1.600-3.200L24.500 15.700v2.600z" fill="#0a0a0a"/></svg></div>
<div class="t tl" style="left:131px;top:493px">Quality</div>
<div class="a ln" style="left:56px;top:529px;width:22px;height:1px"></div>
<div class="a cb" style="left:79px;top:533px"></div>
<div class="a fo" style="left:95px;top:520px"><svg width="28" height="27" viewBox="0 0 28 27"><defs><linearGradient id="fg_folder16" x1="0" y1="0" x2="1" y2="1"><stop offset="0" stop-color="#fcfcfc"/><stop offset="1" stop-color="#dadada"/></linearGradient></defs><path d="M0 4l5-3.500h22.500v19l-4.500 6H0z" fill="#dcdcdc"/><path d="M2.500 5.500l3.500-2.500h19v15.500l-3.500 5H2.500z" fill="url(#fg_folder16)"/><path d="M10.400 10.500h2.400v9h-2.400zM14.600 7h2.600v11h-2.600zM19 9h2.400v8h-2.400z" fill="#0a0a0a"/><path d="M9.500 12.800h13.500v1.100H9.500z" fill="#0a0a0a"/><path d="M6.500 22.800l1.600-3.200L24.500 15.700v2.600z" fill="#0a0a0a"/></svg></div>
<div class="t tl" style="left:131px;top:525px">Warehousing</div>
<div class="a ln" style="left:56px;top:561px;width:22px;height:1px"></div>
<div class="a cb" style="left:79px;top:565px"></div>
<div class="a fo" style="left:95px;top:552px"><svg width="28" height="27" viewBox="0 0 28 27"><defs><linearGradient id="fg_folder17" x1="0" y1="0" x2="1" y2="1"><stop offset="0" stop-color="#fcfcfc"/><stop offset="1" stop-color="#dadada"/></linearGradient></defs><path d="M0 4l5-3.500h22.500v19l-4.500 6H0z" fill="#dcdcdc"/><path d="M2.500 5.500l3.500-2.500h19v15.500l-3.500 5H2.500z" fill="url(#fg_folder17)"/><path d="M10.400 10.500h2.400v9h-2.400zM14.600 7h2.600v11h-2.600zM19 9h2.400v8h-2.400z" fill="#0a0a0a"/><path d="M9.500 12.800h13.500v1.100H9.500z" fill="#0a0a0a"/><path d="M6.500 22.800l1.600-3.200L24.500 15.700v2.600z" fill="#0a0a0a"/></svg></div>
<div class="t tl" style="left:131px;top:557px">Finance</div>
<div class="a ln" style="left:56px;top:593px;width:22px;height:1px"></div>
<div class="a cb" style="left:79px;top:597px"></div>
<div class="a fo" style="left:95px;top:584px"><svg width="28" height="27" viewBox="0 0 28 27"><defs><linearGradient id="fg_folder18" x1="0" y1="0" x2="1" y2="1"><stop offset="0" stop-color="#fcfcfc"/><stop offset="1" stop-color="#dadada"/></linearGradient></defs><path d="M0 4l5-3.500h22.500v19l-4.500 6H0z" fill="#dcdcdc"/><path d="M2.500 5.500l3.500-2.500h19v15.500l-3.500 5H2.500z" fill="url(#fg_folder18)"/><path d="M10.400 10.500h2.400v9h-2.400zM14.600 7h2.600v11h-2.600zM19 9h2.400v8h-2.400z" fill="#0a0a0a"/><path d="M9.500 12.800h13.500v1.100H9.500z" fill="#0a0a0a"/><path d="M6.500 22.800l1.600-3.200L24.500 15.700v2.600z" fill="#0a0a0a"/></svg></div>
<div class="t tl" style="left:131px;top:589px">Personnel</div>
</div>
<div class="a" style="left:644px;top:553px;width:3px;height:3px;background:#555"></div>
<div class="a" style="left:644px;top:561px;width:3px;height:3px;background:#555"></div>
<div class="a" style="left:644px;top:569px;width:3px;height:3px;background:#555"></div>
<div class="a" style="left:1270px;top:757px;width:3px;height:3px;background:#555"></div>
<div class="a" style="left:1278px;top:757px;width:3px;height:3px;background:#555"></div>
<div class="a" style="left:1286px;top:757px;width:3px;height:3px;background:#555"></div>
<div id="ulist" class="a">
<div class="grid a" style="left:0;top:0;width:1018px;height:43px">
<div class="gh" style="left:0px;width:37px"><span>No.</span></div>
<div class="gh" style="left:37px;width:32px"><span class="c">Select</span></div>
<div class="gh" style="left:69px;width:60px"><span>User Name</span></div>
<div class="gh" style="left:129px;width:60px"><span>Worker No.</span></div>
<div class="gh" style="left:189px;width:74px"><span>Department</span></div>
<div class="gh" style="left:263px;width:60px"><span>Department</span></div>
<div class="gh" style="left:323px;width:53px"><span>Rank</span></div>
<div class="gh" style="left:376px;width:37px"><span>Gender</span></div>
<div class="gh" style="left:413px;width:71px"><span>Card Code</span></div>
<div class="gh" style="left:484px;width:72px"><span>Card ID</span></div>
<div class="gh" style="left:556px;width:61px"><span>Password</span></div>
<div class="gh" style="left:617px;width:35px"><span>Religion</span></div>
<div class="gh" style="left:652px;width:79px"><span>Mobile</span></div>
<div class="gh" style="left:731px;width:165px"><span>Address</span></div>
<div class="gh" style="left:896px;width:120px"><span>ID No.</span></div>
<div class="gc0" style="left:0;top:20px;width:37px;height:21px"></div>
<div class="gc" style="left:37px;top:20px;width:32px;height:21px"></div>
<div class="gc" style="left:69px;top:20px;width:60px;height:21px"></div>
<div class="gc" style="left:129px;top:20px;width:60px;height:21px"></div>
<div class="gc" style="left:189px;top:20px;width:74px;height:21px"></div>
<div class="gc" style="left:263px;top:20px;width:60px;height:21px"></div>
<div class="gc" style="left:323px;top:20px;width:53px;height:21px"></div>
<div class="gc" style="left:376px;top:20px;width:37px;height:21px"></div>
<div class="gc" style="left:413px;top:20px;width:71px;height:21px"></div>
<div class="gc" style="left:484px;top:20px;width:72px;height:21px"></div>
<div class="gc" style="left:556px;top:20px;width:61px;height:21px"></div>
<div class="gc" style="left:617px;top:20px;width:35px;height:21px"></div>
<div class="gc" style="left:652px;top:20px;width:79px;height:21px"></div>
<div class="gc" style="left:731px;top:20px;width:165px;height:21px"></div>
<div class="gc" style="left:896px;top:20px;width:120px;height:21px"></div>
<div class="a cb2" style="left:46px;top:25px"></div>
</div>
</div>
<div id="tabp" class="a">
<div id="tabstrip" class="a"><div class="tab on" style="left:2px;width:120px">Access Level Detail</div><div class="tab" style="left:122px;width:83px">Daily Report</div></div>
<div class="grid a" style="left:2px;top:30px;width:704px;height:44px">
<div class="gh" style="left:0px;width:47px;height:23px;line-height:27px"><span>No.</span></div>
<div class="gh" style="left:47px;width:83px;height:23px;line-height:27px"><span>Door Name</span></div>
<div class="gh" style="left:130px;width:79px;height:23px;line-height:27px"><span>Tag Name</span></div>
<div class="gh" style="left:209px;width:72px;height:23px;line-height:27px"><span>Type</span></div>
<div class="gh" style="left:281px;width:108px;height:23px;line-height:27px"><span>Expiration</span></div>
<div class="gh" style="left:389px;width:73px;height:23px;line-height:27px"><span>Time Zone</span></div>
<div class="gh" style="left:462px;width:60px;height:23px;line-height:27px"><span>Access Time</span></div>
<div class="gh" style="left:522px;width:60px;height:23px;line-height:27px"><span>Holiday</span></div>
<div class="gh" style="left:582px;width:60px;height:23px;line-height:27px"><span>Uploaded</span></div>
<div class="gh" style="left:642px;width:60px;height:23px;line-height:27px"><span>Status</span></div>
<div class="gc0" style="left:0;top:23px;width:47px;height:20px"></div>
<div class="gc" style="left:47px;top:23px;width:83px;height:20px"></div>
<div class="gc" style="left:130px;top:23px;width:79px;height:20px"></div>
<div class="gc" style="left:209px;top:23px;width:72px;height:20px"></div>
<div class="gc" style="left:281px;top:23px;width:108px;height:20px"></div>
<div class="gc" style="left:389px;top:23px;width:73px;height:20px"></div>
<div class="gc" style="left:462px;top:23px;width:60px;height:20px"></div>
<div class="gc" style="left:522px;top:23px;width:60px;height:20px"></div>
<div class="gc" style="left:582px;top:23px;width:60px;height:20px"></div>
<div class="gc" style="left:642px;top:23px;width:60px;height:20px"></div>
</div>
</div>
<div class="a" style="left:1914px;top:56px;width:6px;height:931px;background:linear-gradient(to right,#4f93cf,#8fc0ea)"></div>
<div class="a" style="left:217px;top:987px;width:1703px;height:27px;background:linear-gradient(to bottom,#1c659b,#175a90)"></div>
<div id="status" class="a">
<div class="sp" style="left:0px;width:274px;text-align:left">Operator:SYSTEM,login time:2017/6/28 15:32:51.</div>
<div class="sp" style="left:277px;width:202px;text-align:left">CorporateName:Corporation Name</div>
<div class="sp" style="left:480px;width:116px;text-align:left">Voice promot setting</div>
<div class="sp" style="left:597px;width:1089px;text-align:left"></div>
<div class="sp" style="left:1687px;width:96px;text-align:center">Access</div>
<div class="sp" style="left:1784px;width:117px;text-align:center">06/28/2017 15:37:11</div>
</div>
</div></body></html>
